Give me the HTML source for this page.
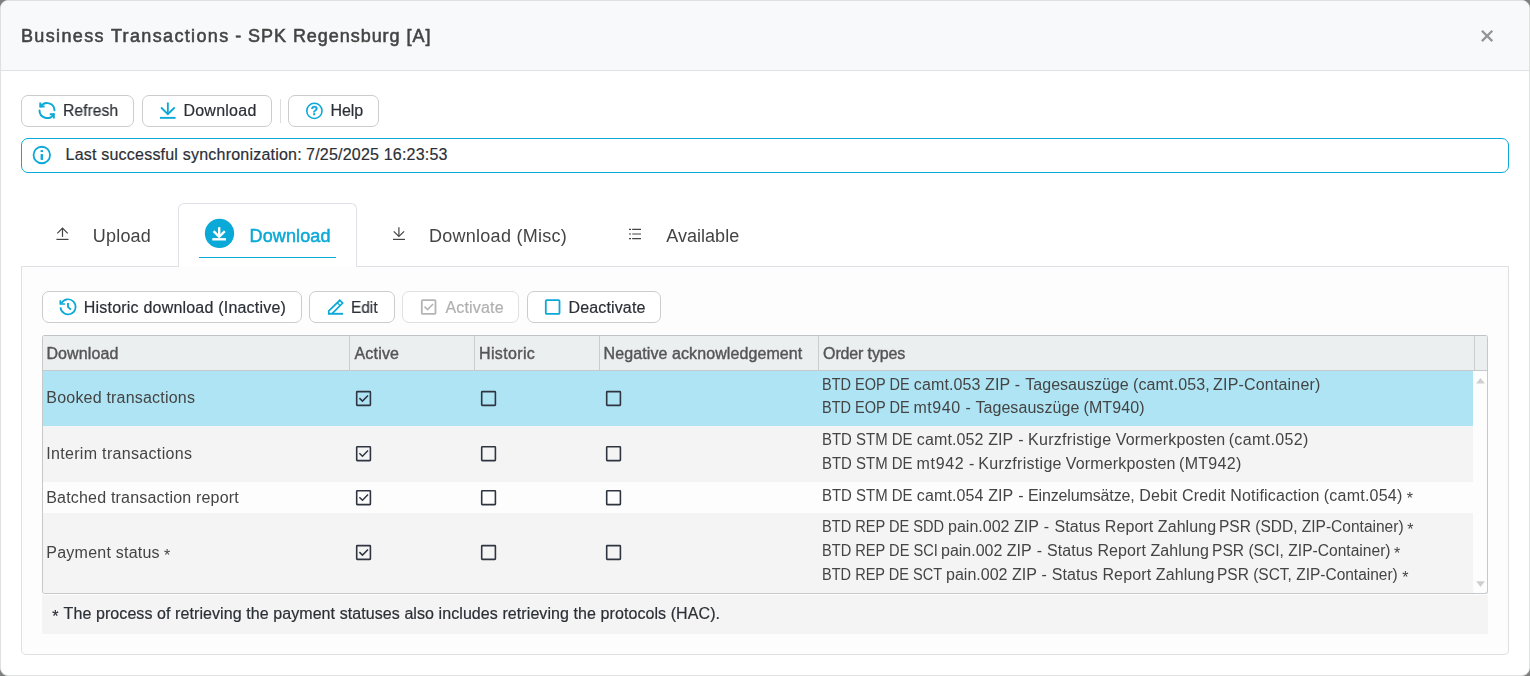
<!DOCTYPE html>
<html lang="en">
<head>
<meta charset="utf-8">
<title>Business Transactions - SPK Regensburg [A]</title>
<style>
:root{--f:"Liberation Sans",Arial,sans-serif;--blue:#0aa9d7;--txt:#444;--btxt:#2b2f36;}
*{box-sizing:border-box;margin:0;padding:0}
html,body{width:1530px;height:676px;overflow:hidden;background:#7f7f7f;font-family:var(--f);color:var(--txt)}
.modal{position:absolute;left:0;top:0;width:1530px;height:676px;background:#fff;border:1px solid #dfe1e1;border-radius:8px;overflow:hidden}
.hdr{position:absolute;left:0;top:0;width:1528px;height:70px;background:#f8f9fa;border-bottom:1px solid #dee2e6}
.t{position:absolute;white-space:pre;line-height:20px;height:20px}
.t span{position:absolute;top:0;transform-origin:0 0}
.g{will-change:transform}
.title{top:25px;font-size:18px;font-weight:400;color:#444;-webkit-text-stroke:.55px #444}
.close{position:absolute;left:1479px;top:28px;width:14px;height:14px}
.btn{position:absolute;height:32px;border:1px solid #ccc;border-radius:7px;background:#fff}
.bt{font-size:16px;color:var(--btxt);-webkit-text-stroke:.2px}
.ic{position:absolute}
.sep{position:absolute;left:279px;top:98px;width:1px;height:24px;background:#ddd}
.info{position:absolute;left:20px;top:137px;width:1488px;height:35px;border:1px solid var(--blue);border-radius:7px;background:#fff}
.panel{position:absolute;left:20px;top:265px;width:1488px;height:389px;border:1px solid #e0e0e0;border-top-color:#dee2e6;border-radius:0 0 5px 5px;background:#fdfdfd}
.tab{font-size:18px;color:#444}
.tabact{position:absolute;left:177px;top:202px;width:179px;height:64px;border:1px solid #dee2e6;border-bottom:none;border-radius:6px 6px 0 0;background:#fff}
.uline{position:absolute;left:197.9px;top:255.8px;width:137.2px;height:1.4px;background:var(--blue)}
.grid{position:absolute;left:41px;top:334px;width:1446px;height:259px;border:1px solid #c5c9cc;border-top-color:#c0c4c6;border-radius:3px;background:#fdfdfd;overflow:hidden}
.gh{position:absolute;left:0;top:0;width:1444px;height:35px;background:#eceff0;border-bottom:1px solid #c5c9cc}
.gs{position:absolute;top:0;width:1px;height:34px;background:#c9cdd0}
.h{font-size:16px;font-weight:400;color:#555;-webkit-text-stroke:.4px #555}
.row{position:absolute;left:0;width:1430px}
.c{font-size:16px;color:#444}
.cb{position:absolute;width:15px;height:15px;border:1.5px solid #2e3a4a;border-radius:1.5px}
.foot{position:absolute;left:41px;top:594px;width:1446px;height:39px;background:#f4f4f4}
.ft{font-size:16px;color:var(--btxt);-webkit-text-stroke:.2px}
</style>
</head>
<body>
<div class="modal">
  <div class="hdr">
  <div class="t title g" style="left:0;top:25px"><span id="s0_0" style="left:20.00px;letter-spacing:1.356px">Business Transactions</span> <span id="s0_1" style="left:234.17px;letter-spacing:0.000px">-</span> <span id="s0_2" style="left:247.08px;letter-spacing:0.954px">SPK Regensburg [A]</span></div>
    <svg class="close" viewBox="0 0 14 14"><path d="M1.9 1.7 L12.3 12.1 M12.3 1.7 L1.9 12.1" stroke="#959595" stroke-width="2.3" fill="none"/></svg>
  </div>

  <!-- top toolbar -->
  <div class="btn" style="left:20px;top:94px;width:113px"></div>
  <div class="t bt g" style="left:0;top:100px"><span id="s1_0" style="left:61.96px;letter-spacing:0.000px;transform:scaleX(0.9821)">Refresh</span></div>
  <div class="btn" style="left:141px;top:94px;width:130px"></div>
  <div class="t bt g" style="left:0;top:100px"><span id="s2_0" style="left:182.43px;letter-spacing:0.247px">Download</span></div>
  <div class="sep"></div>
  <div class="btn" style="left:287px;top:94px;width:91px"></div>
  <div class="t bt g" style="left:0;top:100px"><span id="s3_0" style="left:329.51px;letter-spacing:-0.105px">Help</span></div>

  <div class="info"></div>
  <div class="t bt" style="left:0;top:144px"><span id="s4_0" style="left:64.53px;letter-spacing:0.216px">Last successful synchronization:</span> <span id="s4_1" style="left:305.12px;letter-spacing:0.200px">7/25/2025 16:23:53</span></div>

  <!-- tabs -->
  <div class="panel"></div>
  <div class="tabact"></div>
  <div class="uline"></div>
  <div class="t tab g" style="left:0;top:225px"><span id="s5_0" style="left:91.66px;letter-spacing:0.237px">Upload</span></div>
  <div class="t tab g" style="left:0;top:225px;color:var(--blue);-webkit-text-stroke:.5px var(--blue)"><span id="s6_0" style="left:248.49px;letter-spacing:0.142px">Download</span></div>
  <div class="t tab g" style="left:0;top:225px"><span id="s7_0" style="left:427.99px;letter-spacing:0.267px">Download (Misc)</span></div>
  <div class="t tab g" style="left:0;top:225px"><span id="s8_0" style="left:665.25px;letter-spacing:0.025px">Available</span></div>

  <!-- inner toolbar -->
  <div class="btn" style="left:41px;top:290px;width:260px"></div>
  <div class="t bt g" style="left:0;top:297px"><span id="s9_0" style="left:82.87px;letter-spacing:0.202px">Historic download (Inactive)</span></div>
  <div class="btn" style="left:308px;top:290px;width:86px"></div>
  <div class="t bt g" style="left:0;top:297px"><span id="s10_0" style="left:350.38px;letter-spacing:0.000px;transform:scaleX(0.9621)">Edit</span></div>
  <div class="btn" style="left:401px;top:290px;width:117px;border-color:#e0e0e0"></div>
  <div class="t bt g" style="left:0;top:297px;color:#b0b0b0"><span id="s11_0" style="left:444.41px;letter-spacing:0.181px">Activate</span></div>
  <div class="btn" style="left:526px;top:290px;width:134px"></div>
  <div class="t bt g" style="left:0;top:297px"><span id="s12_0" style="left:567.59px;letter-spacing:0.135px">Deactivate</span></div>

  <!-- grid -->
  <div class="grid">
    <div class="gh">
      <div class="gs" style="left:306px"></div>
      <div class="gs" style="left:431px"></div>
      <div class="gs" style="left:556px"></div>
      <div class="gs" style="left:775px"></div>
      <div class="gs" style="left:1431px"></div>
    </div>
    <div class="row" style="top:35px;height:55px;background:#aee4f3"></div>
    <div class="row" style="top:90px;height:56px;background:#f4f4f4"></div>
    <div class="row" style="top:146px;height:31px;background:#fdfdfd"></div>
    <div class="row" style="top:177px;height:80px;background:#f4f4f4"></div>
  </div>
  <div class="t h g" style="left:0;top:343px"><span id="s13_0" style="left:45.43px;letter-spacing:0.103px">Download</span></div>
  <div class="t h g" style="left:0;top:343px"><span id="s14_0" style="left:353.46px;letter-spacing:0.198px">Active</span></div>
  <div class="t h g" style="left:0;top:343px"><span id="s15_0" style="left:478.00px;letter-spacing:0.352px">Historic</span></div>
  <div class="t h g" style="left:0;top:343px"><span id="s16_0" style="left:602.58px;letter-spacing:0.092px">Negative acknowledgement</span></div>
  <div class="t h g" style="left:0;top:343px"><span id="s17_0" style="left:822.10px;letter-spacing:-0.140px">Order types</span></div>

  <div class="t c g" style="left:0;top:387px"><span id="s18_0" style="left:45.35px;letter-spacing:0.198px">Booked transactions</span></div>
  <div class="t c g" style="left:0;top:443px"><span id="s19_0" style="left:45.15px;letter-spacing:0.328px">Interim transactions</span></div>
  <div class="t c g" style="left:0;top:487px"><span id="s20_0" style="left:45.21px;letter-spacing:0.195px">Batched transaction report</span></div>
  <div class="t c g" style="left:0;top:542px"><span id="s21_0" style="left:45.34px;letter-spacing:0.232px">Payment status</span> <span id="s21_1" style="left:162.94px;top:3px;letter-spacing:0.000px">*</span></div>

  <div class="t c g" style="left:0;top:374px"><span id="s22_0" style="left:821.11px;letter-spacing:0.000px;transform:scaleX(0.9072)">BTD EOP DE</span> <span id="s22_1" style="left:912.87px;letter-spacing:0.108px">camt.053 ZIP</span> <span id="s22_2" style="left:1013.72px;letter-spacing:0.000px">-</span> <span id="s22_3" style="left:1024.30px;letter-spacing:0.015px">Tagesauszüge</span> <span id="s22_4" style="left:1132.00px;letter-spacing:0.129px">(camt.053,</span> <span id="s22_5" style="left:1212.06px;letter-spacing:0.183px">ZIP-Container)</span></div>
  <div class="t c g" style="left:0;top:397px"><span id="s23_0" style="left:821.11px;letter-spacing:0.000px;transform:scaleX(0.9072)">BTD EOP DE</span> <span id="s23_1" style="left:912.41px;letter-spacing:0.573px">mt940</span> <span id="s23_2" style="left:964.39px;letter-spacing:0.000px">-</span> <span id="s23_3" style="left:974.39px;letter-spacing:0.072px">Tagesauszüge</span> <span id="s23_4" style="left:1082.47px;letter-spacing:0.095px">(MT940)</span></div>
  <div class="t c g" style="left:0;top:429px"><span id="s24_0" style="left:821.12px;letter-spacing:0.000px;transform:scaleX(0.9350)">BTD STM DE</span> <span id="s24_1" style="left:915.86px;letter-spacing:0.114px">camt.052 ZIP</span> <span id="s24_2" style="left:1017.35px;letter-spacing:0.000px">-</span> <span id="s24_3" style="left:1026.99px;letter-spacing:0.288px">Kurzfristige</span> <span id="s24_4" style="left:1114.87px;letter-spacing:0.145px">Vormerkposten</span> <span id="s24_5" style="left:1227.70px;letter-spacing:0.340px">(camt.052)</span></div>
  <div class="t c g" style="left:0;top:453px"><span id="s25_0" style="left:821.12px;letter-spacing:0.000px;transform:scaleX(0.9350)">BTD STM DE</span> <span id="s25_1" style="left:915.55px;letter-spacing:0.687px">mt942</span> <span id="s25_2" style="left:967.95px;letter-spacing:0.000px">-</span> <span id="s25_3" style="left:977.23px;letter-spacing:0.298px">Kurzfristige</span> <span id="s25_4" style="left:1064.70px;letter-spacing:0.182px">Vormerkposten</span> <span id="s25_5" style="left:1178.00px;letter-spacing:0.306px">(MT942)</span></div>
  <div class="t c g" style="left:0;top:485px"><span id="s26_0" style="left:821.11px;letter-spacing:0.000px;transform:scaleX(0.9351)">BTD STM DE</span> <span id="s26_1" style="left:915.87px;letter-spacing:0.112px">camt.054 ZIP</span> <span id="s26_2" style="left:1017.36px;letter-spacing:0.000px">-</span> <span id="s26_3" style="left:1026.97px;letter-spacing:-0.131px">Einzelumsätze,</span> <span id="s26_4" style="left:1138.33px;letter-spacing:0.159px">Debit Credit Notificaction</span> <span id="s26_5" style="left:1322.68px;letter-spacing:0.244px">(camt.054)</span> <span id="s26_6" style="left:1405.73px;top:3px;letter-spacing:0.000px">*</span></div>
  <div class="t c g" style="left:0;top:516px"><span id="s27_0" style="left:820.91px;letter-spacing:0.000px;transform:scaleX(0.9118)">BTD REP DE SDD</span> <span id="s27_1" style="left:946.90px;letter-spacing:0.000px;transform:scaleX(1.0022)">pain.002 ZIP</span> <span id="s27_2" style="left:1042.73px;letter-spacing:0.000px">-</span> <span id="s27_3" style="left:1053.53px;letter-spacing:0.073px">Status Report Zahlung</span> <span id="s27_4" style="left:1218.33px;letter-spacing:0.000px;transform:scaleX(0.9700)">PSR (SDD, ZIP-Container)</span> <span id="s27_5" style="left:1406.33px;top:3px;letter-spacing:0.000px">*</span></div>
  <div class="t c g" style="left:0;top:540px"><span id="s28_0" style="left:820.57px;letter-spacing:0.000px;transform:scaleX(0.9131)">BTD REP DE SCI</span> <span id="s28_1" style="left:940.28px;letter-spacing:0.000px;transform:scaleX(0.9993)">pain.002 ZIP</span> <span id="s28_2" style="left:1035.86px;letter-spacing:0.000px">-</span> <span id="s28_3" style="left:1046.00px;letter-spacing:0.087px">Status Report Zahlung</span> <span id="s28_4" style="left:1211.03px;letter-spacing:0.000px;transform:scaleX(0.9749)">PSR (SCI, ZIP-Container)</span> <span id="s28_5" style="left:1393.08px;top:3px;letter-spacing:0.000px">*</span></div>
  <div class="t c g" style="left:0;top:564px"><span id="s29_0" style="left:821.02px;letter-spacing:0.000px;transform:scaleX(0.9089)">BTD REP DE SCT</span> <span id="s29_1" style="left:944.90px;letter-spacing:0.000px;transform:scaleX(1.0022)">pain.002 ZIP</span> <span id="s29_2" style="left:1040.38px;letter-spacing:0.000px">-</span> <span id="s29_3" style="left:1050.66px;letter-spacing:0.137px">Status Report Zahlung</span> <span id="s29_4" style="left:1215.82px;letter-spacing:0.000px;transform:scaleX(0.9682)">PSR (SCT, ZIP-Container)</span> <span id="s29_5" style="left:1401.33px;top:3px;letter-spacing:0.000px">*</span></div>


  <svg class="ov" width="1530" height="676" viewBox="0 0 1530 676" style="position:absolute;left:-1px;top:-1px;pointer-events:none">
    <!-- refresh -->
    <g fill="none" stroke="#0aa9d7" stroke-width="2" stroke-linecap="round" stroke-linejoin="miter">
      <path d="M54.5 110.2 A7.5 7.5 0 0 0 40.8 106.4"/>
      <path d="M40.3 102.6 V106.6 H44.6" stroke-linecap="butt"/>
      <path d="M39.5 110.6 A7.5 7.5 0 0 0 53.4 114.4"/>
      <path d="M49.7 114.2 H53.8 V118.4" stroke-linecap="butt"/>
    </g>
    <!-- download (button) -->
    <g fill="none" stroke="#0aa9d7" stroke-width="1.8" stroke-linecap="round" stroke-linejoin="miter">
      <path d="M167.85 103.2 V113.6"/>
      <path d="M161.6 108 L167.85 114.2 L174.1 108"/>
      <path d="M160 117.85 H175.6" stroke-linecap="butt" stroke-width="1.9"/>
    </g>
    <!-- help -->
    <circle cx="314.4" cy="110.9" r="7.6" fill="none" stroke="#0aa9d7" stroke-width="1.6"/>
    <text x="314.4" y="115.1" text-anchor="middle" font-family="Liberation Sans,Arial,sans-serif" font-weight="700" font-size="12" fill="#0aa9d7" stroke="#0aa9d7" stroke-width=".3">?</text>
    <!-- info -->
    <circle cx="41.8" cy="155" r="8.25" fill="none" stroke="#0aa9d7" stroke-width="1.8"/>
    <rect x="40.6" y="150.1" width="2.4" height="1.9" fill="#0aa9d7"/><rect x="40.6" y="154.1" width="2.4" height="5.8" fill="#0aa9d7"/>
    <!-- tab: upload -->
    <g fill="none" stroke="#444" stroke-width="1.2" stroke-linejoin="miter">
      <path d="M62.5 228.2 V236.9"/>
      <path d="M57.3 233.4 L62.5 228.2 L67.7 233.4"/>
      <path d="M56.4 239.4 H68.5"/>
    </g>
    <!-- tab: download active -->
    <circle cx="219.5" cy="233.4" r="14.65" fill="#0aa9d7"/>
    <g fill="none" stroke="#fff" stroke-width="2.4" stroke-linejoin="miter">
      <path d="M219.2 227.2 V236.5"/>
      <path d="M213.6 231.2 L219.2 236.8 L224.8 231.2"/>
      <path d="M212.3 239.3 H226"/>
    </g>
    <!-- tab: download misc -->
    <g fill="none" stroke="#444" stroke-width="1.2" stroke-linejoin="miter">
      <path d="M398.9 227.2 V236"/>
      <path d="M393.7 231.3 L398.9 236.5 L404.1 231.3"/>
      <path d="M393 239.4 H405"/>
    </g>
    <!-- tab: available (list) -->
    <g fill="none" stroke="#444" stroke-width="1.2">
      <path d="M629 229.4 H631 M632.2 229.4 H641"/>
      <path d="M629 234 H631 M632.2 234 H641"/>
      <path d="M629 238.6 H631 M632.2 238.6 H641"/>
    </g>
    <!-- history -->
    <g fill="none" stroke="#0aa9d7" stroke-width="1.7" stroke-linejoin="miter">
      <path d="M61.3 303.4 A7.55 7.55 0 1 1 60.5 307.4"/>
      <path d="M60.3 300.2 V304 H64.9"/>
      <path d="M68 303.1 V306.9 L70.9 309.6" stroke-width="1.9"/>
    </g>
    <!-- edit -->
    <g fill="none" stroke="#0aa9d7" stroke-width="1.7" stroke-linejoin="miter">
      <path d="M328.8 313.8 V310.8 L339.8 300.3 L342.6 303 L331.9 313.8"/>
      <path d="M327.9 313.8 H343.1" stroke-width="1.9"/>
      <path d="M337.3 302.8 L340.1 305.6" stroke-width="1.3"/>
    </g>
    <!-- activate (disabled) -->
    <rect x="421.8" y="300.1" width="13.7" height="13.8" rx="1" fill="none" stroke="#b4b4b4" stroke-width="1.8"/><path d="M424.5 306.6 L427.6 309.6 L433.1 303.90000000000003" fill="none" stroke="#b4b4b4" stroke-width="1.5"/>
    <!-- deactivate -->
    <rect x="545.8" y="300.1" width="13.7" height="13.8" rx="1" fill="none" stroke="#0aa9d7" stroke-width="1.8"/>
    <!-- grid checkboxes -->
    <rect x="356.7" y="391.6" width="13.7" height="13.8" rx="0.6" fill="none" stroke="#2e3440" stroke-width="1.6"/><path d="M359.4 398.1 L362.5 401.1 L368.0 395.40000000000003" fill="none" stroke="#2e3440" stroke-width="1.5"/><rect x="481.7" y="391.6" width="13.7" height="13.8" rx="0.6" fill="none" stroke="#2e3440" stroke-width="1.6"/><rect x="606.6999999999999" y="391.6" width="13.7" height="13.8" rx="0.6" fill="none" stroke="#2e3440" stroke-width="1.6"/>
    <rect x="356.7" y="446.8" width="13.7" height="13.8" rx="0.6" fill="none" stroke="#2e3440" stroke-width="1.6"/><path d="M359.4 453.3 L362.5 456.3 L368.0 450.6" fill="none" stroke="#2e3440" stroke-width="1.5"/><rect x="481.7" y="446.8" width="13.7" height="13.8" rx="0.6" fill="none" stroke="#2e3440" stroke-width="1.6"/><rect x="606.6999999999999" y="446.8" width="13.7" height="13.8" rx="0.6" fill="none" stroke="#2e3440" stroke-width="1.6"/>
    <rect x="356.7" y="490.8" width="13.7" height="13.8" rx="0.6" fill="none" stroke="#2e3440" stroke-width="1.6"/><path d="M359.4 497.3 L362.5 500.3 L368.0 494.6" fill="none" stroke="#2e3440" stroke-width="1.5"/><rect x="481.7" y="490.8" width="13.7" height="13.8" rx="0.6" fill="none" stroke="#2e3440" stroke-width="1.6"/><rect x="606.6999999999999" y="490.8" width="13.7" height="13.8" rx="0.6" fill="none" stroke="#2e3440" stroke-width="1.6"/>
    <rect x="356.7" y="545.5999999999999" width="13.7" height="13.8" rx="0.6" fill="none" stroke="#2e3440" stroke-width="1.6"/><path d="M359.4 552.0999999999999 L362.5 555.0999999999999 L368.0 549.4" fill="none" stroke="#2e3440" stroke-width="1.5"/><rect x="481.7" y="545.5999999999999" width="13.7" height="13.8" rx="0.6" fill="none" stroke="#2e3440" stroke-width="1.6"/><rect x="606.6999999999999" y="545.5999999999999" width="13.7" height="13.8" rx="0.6" fill="none" stroke="#2e3440" stroke-width="1.6"/>
    <!-- scrollbar arrows -->
    <path d="M1476.2 383.6 L1480.5 377.9 L1484.8 383.6 Z" fill="#cfcfcf"/>
    <path d="M1476.2 581.3 L1480.5 587 L1484.8 581.3 Z" fill="#cfcfcf"/>
  </svg>
  <div class="foot"></div>
  <div class="t ft" style="left:0;top:603px"><span id="s30_0" style="left:51.37px;top:3px;letter-spacing:0.000px">*</span> <span id="s30_1" style="left:62.62px;letter-spacing:0.079px">The process of retrieving the payment statuses also includes retrieving the protocols (HAC).</span></div>
</div>
</body>
</html>
